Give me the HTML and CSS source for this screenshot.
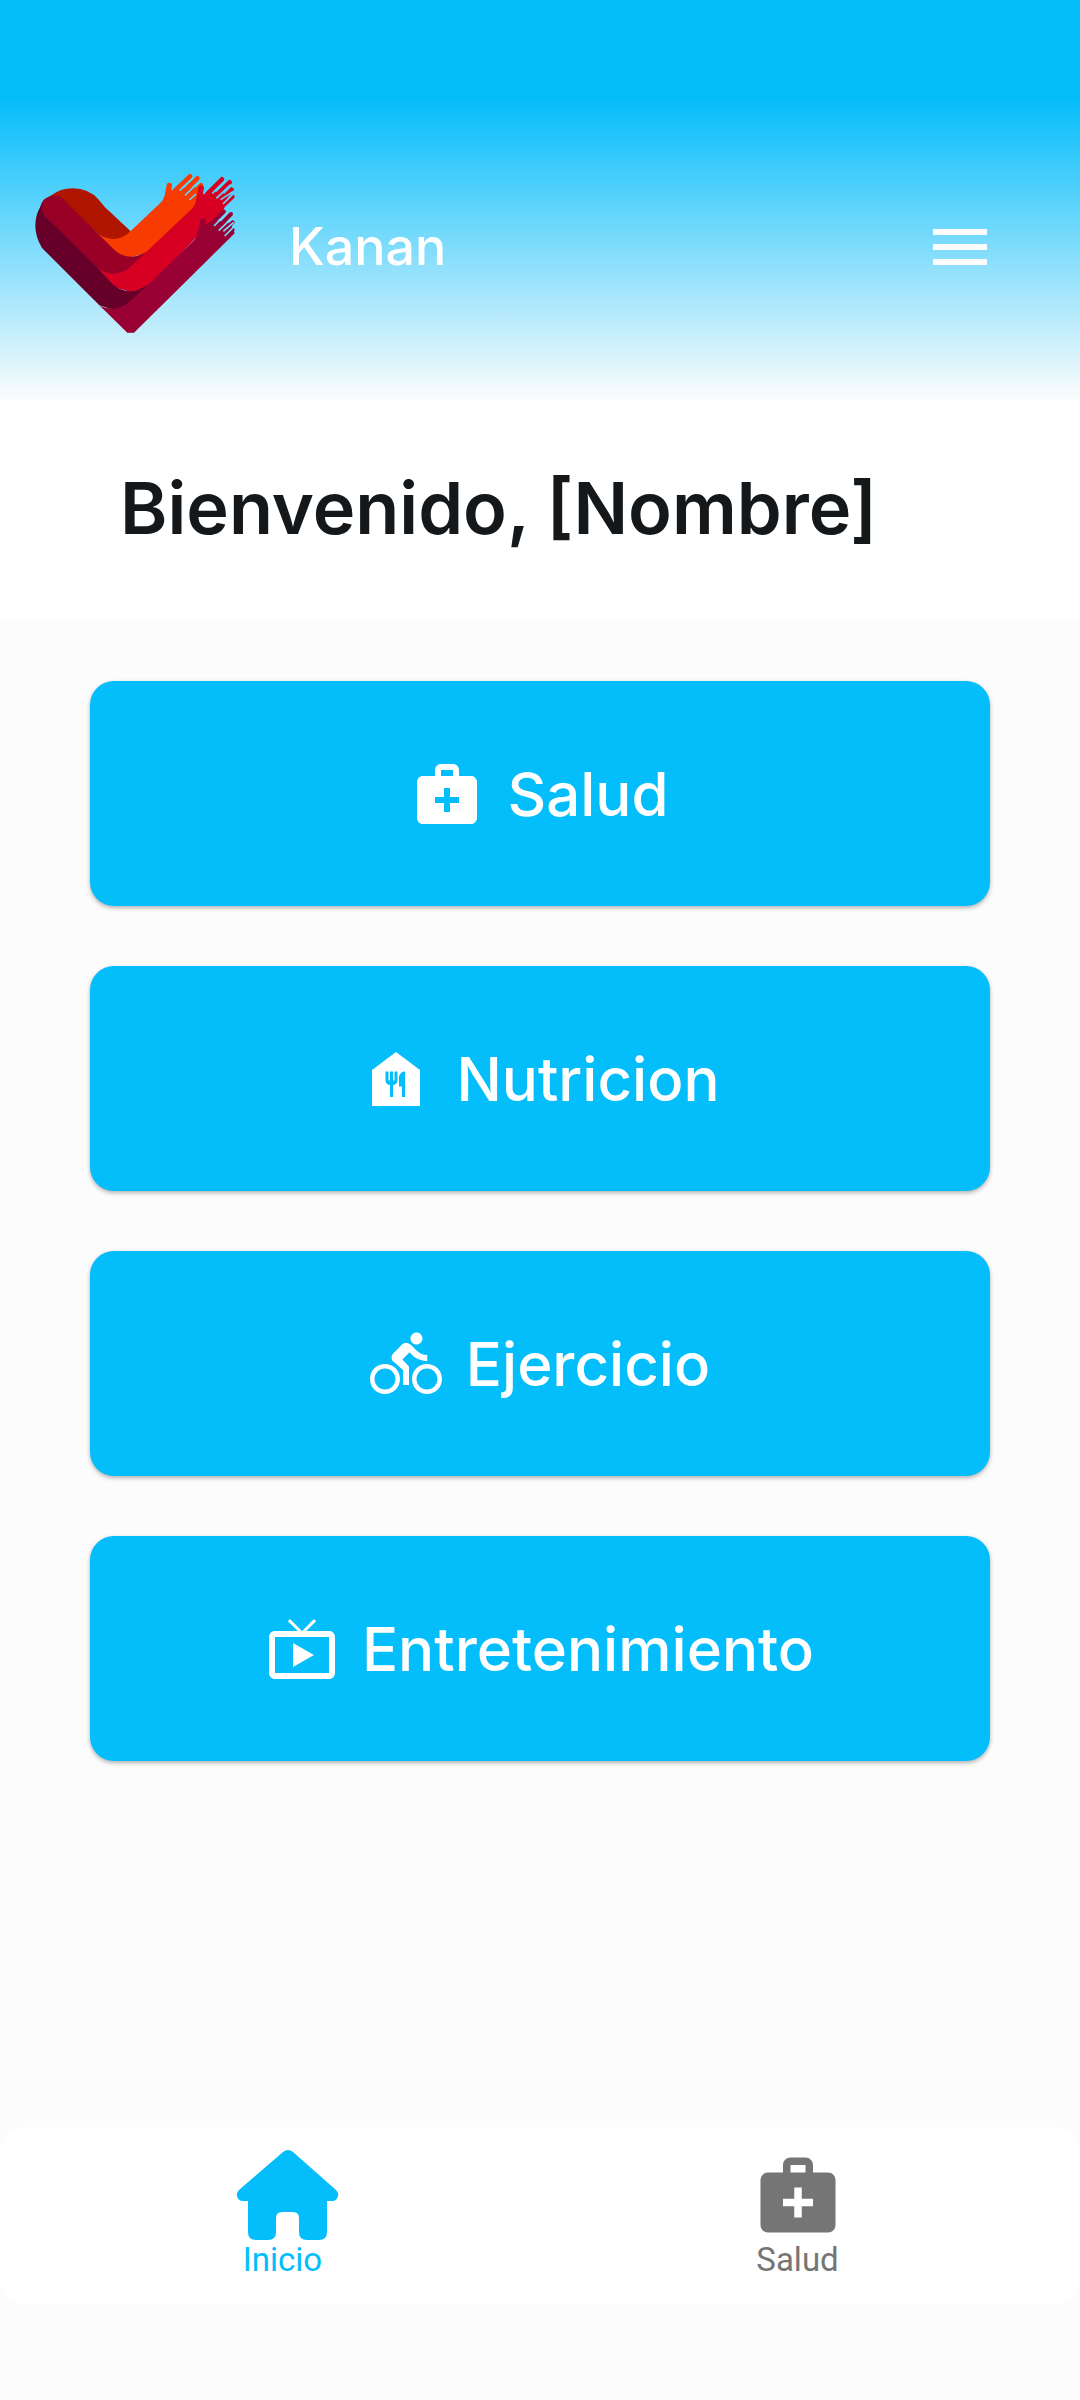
FILE: index.html
```html
<!DOCTYPE html>
<html lang="es">
<head>
<meta charset="utf-8">
<meta name="viewport" content="width=device-width, initial-scale=1">
<title>Kanan</title>
<link rel="stylesheet" href="styles.css">
</head>
<body>
<header class="topbar">
  <svg class="logo" viewBox="36 0 618 522" aria-hidden="true">
    <path fill="#b01500" d="M92 107A112 112 0 0 1 158 85Q207 86 235 118L255 142L332 214L312 240Q280 243 245 232L120 120Z"/>
    <g fill="#f83b00" stroke="#f83b00" stroke-linecap="round">
      <path stroke="none" d="M228 216Q252 237 282 237Q312 234 332 213L420 130Q430 122 432 112L448 88L460 92L475 85L545 80L525 140L378 280L332 292L280 280Z"/>
      <path stroke-width="16" d="M448 76L441 112"/>
      <path stroke-width="14" d="M462 95L510 49M478 108L532 55M500 118L543 76"/>
    </g>
    <path stroke="#5fd3f8" stroke-width="5" d="M479 92L521 52M495 106L537 66M508 120L528 102"/>
    <path fill="#990026" d="M60 145Q66 108 103 107Q122 110 135 123L275 262Q300 290 335 290Q355 290 378 276L340 325Q305 345 270 342L225 330L78 180Q66 160 60 145Z"/>
    <g fill="#d70022" stroke="#d70022" stroke-linecap="round">
      <path stroke="none" d="M232 323Q255 341 280 341Q310 340 330 322L515 147Q526 137 528 120L545 95L552 104L568 90L625 104L608 158L555 205L378 390L332 396L280 380Z"/>
      <path stroke-width="16" d="M544 84L537 118"/>
      <path stroke-width="14" d="M560 104L606 58M575 120L629 67M590 135L635 89M600 145L637 110"/>
    </g>
    <path stroke="#5fd3f8" stroke-width="5" d="M577 100L617 61M589 115L632 74M602 119L640 94M609 132L641 100"/>
    <path fill="#670029" d="M92 107L80 174L235 326L275 370Q300 394 332 394Q355 393 382 374L330 435Q300 450 275 448L238 436L66 264Q46 230 46 197A112 112 0 0 1 92 107Z"/>
    <path fill="#990026" d="M66 140Q69 122 92 107Q120 104 135 123L150 138L90 184L78 172Q66 160 66 140Z"/>
    <g fill="#990033" stroke="#990033" stroke-linecap="round">
      <path stroke="none" d="M238 436Q255 446 278 446Q305 445 325 428L378 380L520 243Q530 234 533 215L550 198L580 180L632 190L644 220L342 518H322Z"/>
      <path stroke-width="16" d="M549 182L540 220"/>
      <path stroke-width="12" d="M564 201L612 155M585 212L633 162M600 224L638 187M612 236L638 209"/>
    </g>
    <path stroke="#76d8f9" stroke-width="5" d="M582 198L622 158M596 212L637 173M610 214L641 187M614 228L643 199"/>
  </svg>
  <span class="brand">Kanan</span>
  <button class="menu" type="button" aria-label="Menú">
    <svg class="icon" viewBox="0 0 24 24"><path d="M3 18h18v-2H3v2zm0-5h18v-2H3v2zm0-7v2h18V6H3z"/></svg>
  </button>
</header>
<section class="welcome"><h1>Bienvenido, [Nombre]</h1></section>
<main class="actions">
  <button class="action" type="button">
    <svg class="icon" viewBox="0 0 24 24"><path d="M20 6h-4V4c0-1.100-.9-2-2-2h-4c-1.100 0-2 .9-2 2v2H4c-1.100 0-2 .9-2 2v12c0 1.100.9 2 2 2h16c1.100 0 2-.9 2-2V8c0-1.100-.9-2-2-2zM10 4h4v2h-4V4zm6 11h-3v3h-2v-3H8v-2h3v-3h2v3h3v2z"/></svg>
    <span>Salud</span>
  </button>
  <button class="action" type="button">
    <svg class="icon" viewBox="0 0 24 24"><path d="M12 3 4 9v12h16V9l-8-6zm.5 9.500c0 .83-.67 1.500-1.500 1.500v4h-1v-4c-.83 0-1.500-.67-1.500-1.500v-3h1v3h.5v-3h1v3h.5v-3h1v3zM15 18h-1v-3.500h-1v-3c0-1.100.9-2 2-2V18z"/></svg>
    <span>Nutricion</span>
  </button>
  <button class="action" type="button">
    <svg class="icon" viewBox="0 0 24 24"><path d="M15.500 5.500c1.100 0 2-.9 2-2s-.9-2-2-2-2 .9-2 2 .9 2 2 2zM5 12c-2.800 0-5 2.200-5 5s2.200 5 5 5 5-2.200 5-5-2.200-5-5-5zm0 8.500c-1.900 0-3.500-1.600-3.500-3.500s1.600-3.500 3.500-3.500 3.500 1.600 3.500 3.500-1.600 3.500-3.500 3.500zm5.800-10l2.400-2.400.8.8c1.300 1.300 3 2.100 5.100 2.100V9c-1.500 0-2.700-.6-3.600-1.500l-1.900-1.900c-.5-.4-1-.6-1.600-.6s-1.100.2-1.400.6L7.800 8.400c-.4.4-.6.9-.6 1.400 0 .6.2 1.100.6 1.400L11 14v5h2v-6.200l-2.200-2.300zM19 12c-2.800 0-5 2.200-5 5s2.200 5 5 5 5-2.200 5-5-2.200-5-5-5zm0 8.500c-1.900 0-3.500-1.600-3.500-3.500s1.600-3.500 3.500-3.500 3.500 1.600 3.500 3.500-1.600 3.500-3.500 3.500z"/></svg>
    <span>Ejercicio</span>
  </button>
  <button class="action" type="button">
    <svg class="icon" viewBox="0 0 24 24"><path d="M21 6h-7.590l3.290-3.290L16 2l-4 4-4-4-.7.710L10.590 6H3c-1.100 0-2 .89-2 2v12c0 1.100.9 2 2 2h18c1.100 0 2-.9 2-2V8c0-1.110-.9-2-2-2zm0 14H3V8h18v12zM9 10v8l7-4z"/></svg>
    <span>Entretenimiento</span>
  </button>
</main>
<nav class="tabs">
  <a class="tab tab-active" href="#inicio">
    <svg class="tab-icon" viewBox="0 0 90 90"><path d="M45 2Q50 -2 55 2L98 40Q101 43 100 46Q99 51 94 51H89V82Q89 90 81 90H69Q61 90 61 82V68Q61 62 55 62H44Q38 62 38 68V82Q38 90 30 90H18Q10 90 10 82V51H5Q0 51 -1 46Q-2 43 1 40Z"/></svg>
    <span>Inicio</span>
  </a>
  <a class="tab" href="#salud">
    <svg class="tab-icon" viewBox="0 0 24 24"><path d="M20 6h-4V4c0-1.100-.9-2-2-2h-4c-1.100 0-2 .9-2 2v2H4c-1.100 0-2 .9-2 2v12c0 1.100.9 2 2 2h16c1.100 0 2-.9 2-2V8c0-1.100-.9-2-2-2zM10 4h4v2h-4V4zm6 11h-3v3h-2v-3H8v-2h3v-3h2v3h3v2z"/></svg>
    <span>Salud</span>
  </a>
</nav>
</body>
</html>
```

FILE: styles.css
```css
:root {
  --blue: #04bdfb;
  --page: #fcfcfc;
}

* {
  box-sizing: border-box;
}

body {
  margin: 0;
  min-height: 100vh;
  display: flex;
  flex-direction: column;
  background: var(--page);
  font-family: Inter, "Liberation Sans", sans-serif;
}

button {
  border: 0;
  padding: 0;
  font: inherit;
  cursor: pointer;
}

svg {
  display: block;
  flex: none;
}

.topbar {
  display: flex;
  align-items: center;
  padding: 160px 84px 66px 32px;
  background: linear-gradient(var(--blue) 98px, var(--page));
}

.logo {
  width: 206px;
  height: 174px;
  margin-right: 51px;
}

.brand {
  color: #fff;
  font-size: 52px;
  line-height: 64px;
  font-weight: 500;
}

.menu {
  margin-left: auto;
  background: none;
  color: var(--page);
}

.icon {
  width: 72px;
  height: 72px;
  fill: currentColor;
}

.welcome {
  padding: 64px 120px 69px;
  background: #fff;
}

.welcome h1 {
  margin: 0;
  color: #14181b;
  font-size: 72px;
  line-height: 88px;
  font-weight: 600;
}

.actions {
  display: flex;
  flex-direction: column;
  gap: 60px;
  padding: 60px 90px;
}

.action {
  display: flex;
  align-items: center;
  justify-content: center;
  gap: 24px;
  min-height: 225px;
  border-radius: 24px;
  background: var(--blue);
  box-shadow: 0 2px 4px rgba(0, 0, 0, 0.3);
  color: #fff;
  font-size: 60px;
  line-height: 72px;
  font-weight: 500;
}

.tabs {
  display: grid;
  grid-template-columns: 1fr 1fr;
  margin-top: auto;
  margin-bottom: 96px;
  padding: 23px 25px 24px;
  border-radius: 24px;
  background: #fff;
}

.tab {
  display: flex;
  flex-direction: column;
  align-items: center;
  color: #757575;
  font-family: Roboto, sans-serif;
  font-size: 33px;
  line-height: 40px;
  text-decoration: none;
}

.tab-active {
  color: var(--blue);
}

.tab-icon {
  width: 90px;
  height: 90px;
  overflow: visible;
  fill: currentColor;
}
```
